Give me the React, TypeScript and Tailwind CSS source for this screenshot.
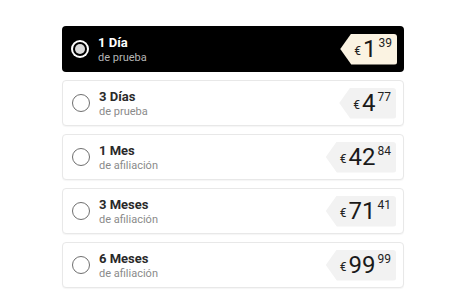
import clsx from "clsx"

type Plan = { title: string; sub: string; whole: string; cents: string }

const PLANS: Plan[] = [
  { title: "1 Día", sub: "de prueba", whole: "1", cents: "39" },
  { title: "3 Días", sub: "de prueba", whole: "4", cents: "77" },
  { title: "1 Mes", sub: "de afiliación", whole: "42", cents: "84" },
  { title: "3 Meses", sub: "de afiliación", whole: "71", cents: "41" },
  { title: "6 Meses", sub: "de afiliación", whole: "99", cents: "99" },
]

export default function App() {
  return (
    <div className="w-[455px] h-[296px] bg-white pt-[26px] pl-[62px] font-['Roboto','Liberation_Sans',sans-serif]">
      <div className="w-[342px] flex flex-col gap-[8px]">
        {PLANS.map((p, i) => (
          <PlanRow key={p.title} plan={p} selected={i === 0} />
        ))}
      </div>
    </div>
  )
}

function PlanRow({ plan, selected }: { plan: Plan; selected: boolean }) {
  return (
    <div
      className={clsx(
        "h-[46px] rounded-[4px] flex items-center pl-[9px] pr-[7px]",
        selected ? "bg-black" : "bg-white border border-[#e8e8e8] shadow-[0_1px_1px_rgba(0,0,0,0.04)]"
      )}
    >
      {selected ? (
        <div className="w-[18px] h-[18px] rounded-full bg-white flex items-center justify-center">
          <div className="w-[14px] h-[14px] rounded-full bg-black flex items-center justify-center">
            <div className="w-[10px] h-[10px] rounded-full bg-[#d9d9d9]" />
          </div>
        </div>
      ) : (
        <div className="w-[18px] h-[18px] rounded-full border-[1.5px] border-[#6f6f6f]" />
      )}
      <div className="ml-[9px] flex flex-col leading-none">
        <span className={clsx("text-[13px] font-bold", selected ? "text-white" : "text-[#2a2a2a]")}>{plan.title}</span>
        <span className={clsx("text-[11px] mt-[3px]", selected ? "text-[#b5b5b5]" : "text-[#8a8a8a]")}>{plan.sub}</span>
      </div>
      <div
        className={clsx(
          "ml-auto h-[31px] flex items-center pl-[14px] pr-[5px] rounded-r-[3px] [clip-path:polygon(11px_0,100%_0,100%_100%,11px_100%,0_50%)]",
          selected ? "bg-[#fbf3e2]" : "bg-[#f2f2f2]"
        )}
      >
        <span className="text-[12px] text-[#222] mr-[2px] mt-[4px]">€</span>
        <span className="text-[24px] text-[#1a1a1a] leading-none">{plan.whole}</span>
        <span className="text-[12px] text-[#222] ml-[2px] self-start mt-[3px] leading-none">{plan.cents}</span>
      </div>
    </div>
  )
}
